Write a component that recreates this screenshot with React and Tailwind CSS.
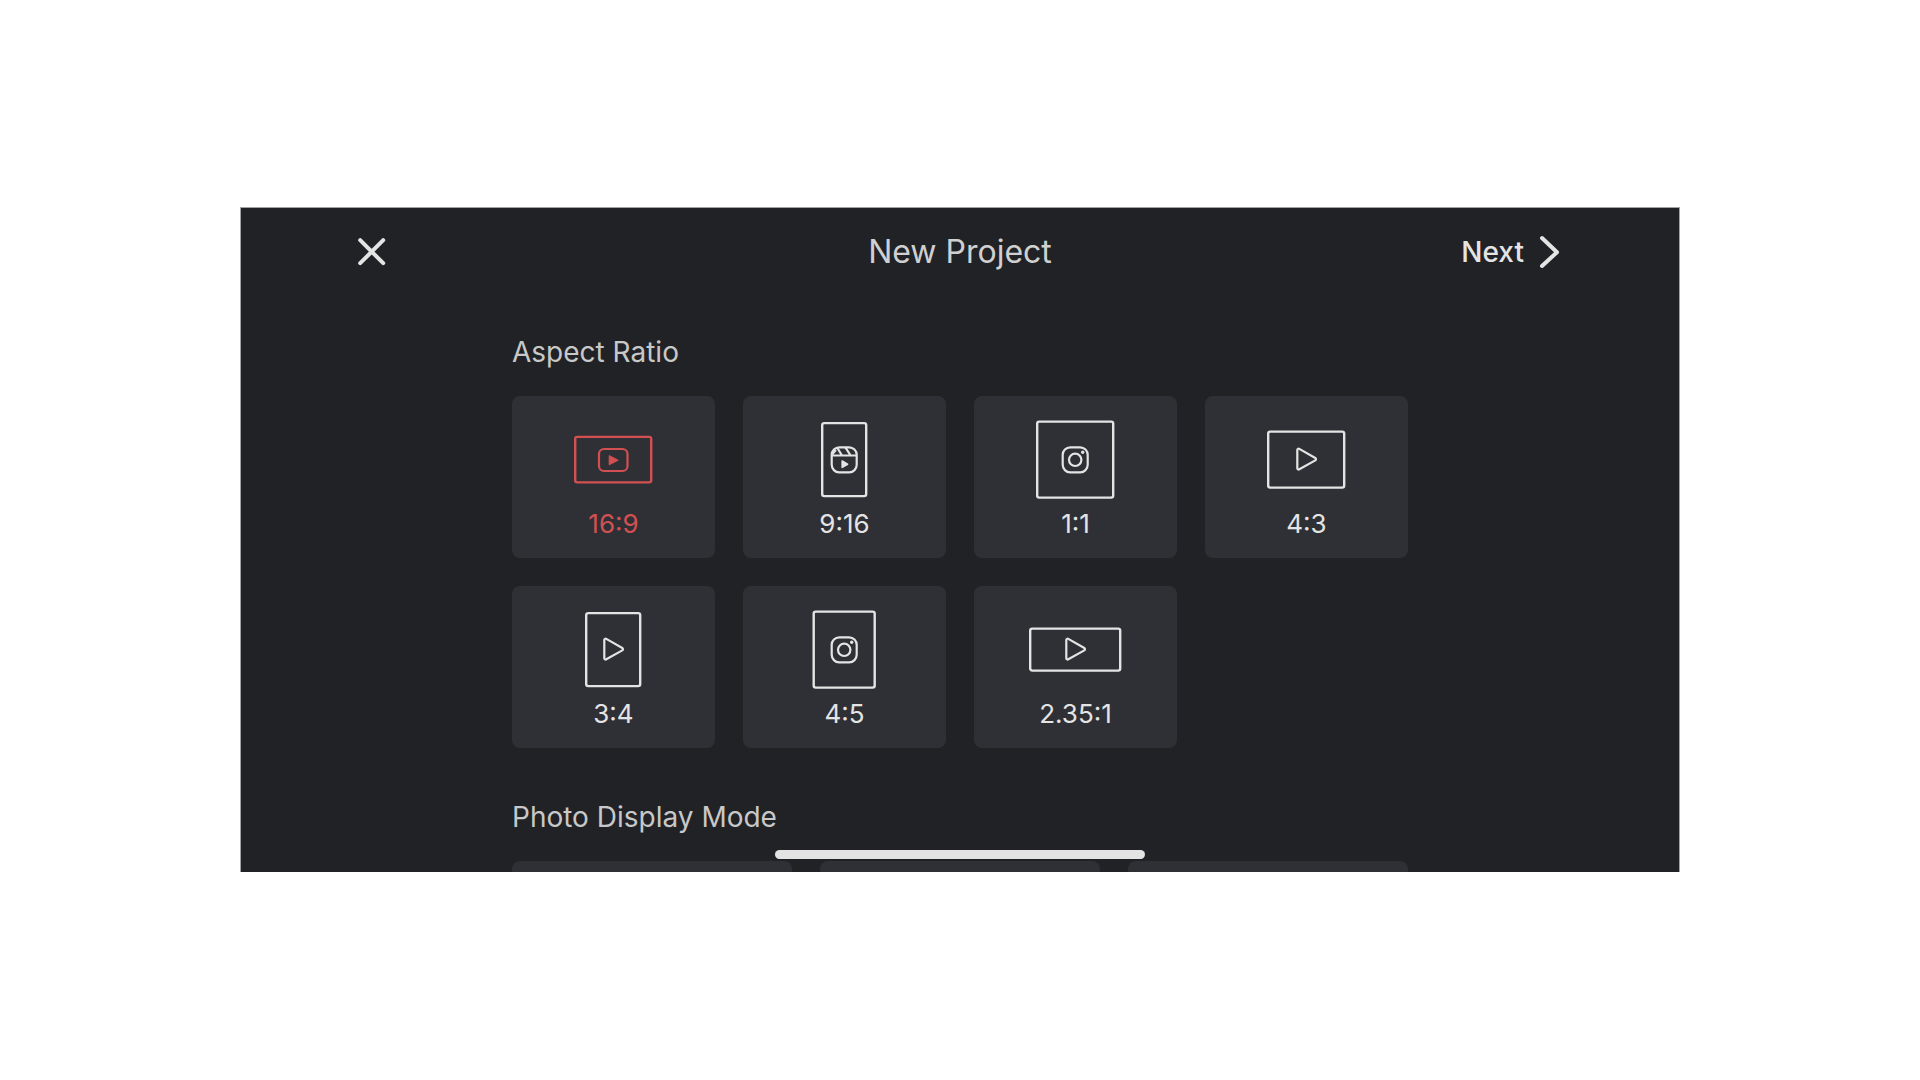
import React, { useState } from 'react';

const YoutubeGlyph = () => (
  <g>
    <rect x="32" y="29" width="28.5" height="22" rx="5" fill="none" stroke="currentColor" strokeWidth="2.2" />
    <path d="M42.2 35.6v9.2l9-4.6z" fill="currentColor" stroke="currentColor" strokeWidth="1" strokeLinejoin="round" />
  </g>
);

const ReelsGlyph = () => (
  <g fill="none" stroke="currentColor" strokeWidth="2.2">
    <rect x="33.7" y="27.3" width="25" height="25" rx="7.5" />
    <path d="M33.7 35.5h25M39.4 28l4.6 7.5M47.4 27.3l5.2 8.2M34.4 34l3.5-4" />
    <path d="M44.2 41v6.4l5.4-3.2z" fill="currentColor" strokeWidth="1.6" strokeLinejoin="round" />
  </g>
);

const InstagramGlyph = () => (
  <g fill="none" stroke="currentColor" strokeWidth="2.2">
    <rect x="33.7" y="27.3" width="25" height="25" rx="7.5" />
    <circle cx="46.2" cy="39.8" r="6.2" />
    <circle cx="53.7" cy="32.3" r="1.7" fill="currentColor" stroke="none" />
  </g>
);

const PlayGlyph = () => (
  <path
    d="M37.3 30v18.2c0 1.1 1.1 1.7 2 1.1l16-8.9c.9-.5.9-1.8 0-2.4l-16-9.1c-.9-.5-2 .1-2 1.1z"
    fill="none"
    stroke="currentColor"
    strokeWidth="2.2"
    strokeLinejoin="round"
  />
);

const ratios = [
  { label: '16:9', width: 76, height: 45.5, Glyph: YoutubeGlyph },
  { label: '9:16', width: 44, height: 73, Glyph: ReelsGlyph },
  { label: '1:1', width: 76, height: 76, Glyph: InstagramGlyph },
  { label: '4:3', width: 76, height: 56, Glyph: PlayGlyph },
  { label: '3:4', width: 54, height: 73, Glyph: PlayGlyph },
  { label: '4:5', width: 61, height: 76, Glyph: InstagramGlyph },
  { label: '2.35:1', width: 90, height: 42, Glyph: PlayGlyph }
];

const photoModes = ['fit', 'fill', 'ken-burns'];

const RatioCard = ({ ratio, selected, onSelect }) => {
  const { label, width, height, Glyph } = ratio;

  return (
    <button
      type="button"
      aria-pressed={selected}
      onClick={() => onSelect(label)}
      className={`flex flex-col items-center rounded-lg bg-[#2f3035] pt-6 pb-[18px] cursor-pointer ${
        selected ? 'text-[#d25052]' : 'text-[#e4e4e4]'
      }`}
    >
      <svg width="93" height="80" viewBox="0 0 93 80" aria-hidden="true">
        <rect
          x={46.2 - width / 2}
          y={39.6 - height / 2}
          width={width}
          height={height}
          rx="2"
          fill="none"
          stroke="currentColor"
          strokeWidth="2.4"
        />
        <Glyph />
      </svg>
      <span className="mt-2 text-[26px] leading-8">{label}</span>
    </button>
  );
};

const App = () => {
  const [selectedRatio, setSelectedRatio] = useState('16:9');

  return (
    <main className="flex min-h-screen items-center justify-center bg-white pb-px font-['Inter',sans-serif]">
      <div className="relative aspect-[288/133] w-3/4 overflow-hidden border-x border-t border-[#a3a3a4] bg-[#212226]">
        <header className="grid h-[88px] grid-cols-3 items-center px-[8%] text-[#e4e4e4]">
          <button type="button" aria-label="Close" className="justify-self-start cursor-pointer">
            <svg width="32" height="32" viewBox="0 0 32 32" aria-hidden="true">
              <path d="M4.2 4.2l23 23M27.2 4.2l-23 23" stroke="currentColor" strokeWidth="4" strokeLinecap="round" />
            </svg>
          </button>
          <h1 className="text-center text-[32px] leading-10 text-[#d0d0d0]">New Project</h1>
          <button type="button" className="flex items-center gap-3 justify-self-end text-[28px] leading-8 font-medium cursor-pointer">
            Next
            <svg width="28" height="36" viewBox="0 0 28 36" aria-hidden="true">
              <path d="M6 4l15 14.2L6 32" fill="none" stroke="currentColor" strokeWidth="4" strokeLinecap="round" strokeLinejoin="round" />
            </svg>
          </button>
        </header>

        <div className="mx-auto flex max-w-4xl flex-col gap-[53px] pt-10">
          <section>
            <h2 className="mb-7 text-[28px] leading-8 text-[#c8c8c8]">Aspect Ratio</h2>
            <div className="grid grid-cols-4 gap-7">
              {ratios.map((ratio) => (
                <RatioCard
                  key={ratio.label}
                  ratio={ratio}
                  selected={selectedRatio === ratio.label}
                  onSelect={setSelectedRatio}
                />
              ))}
            </div>
          </section>

          <section>
            <h2 className="mb-7 text-[28px] leading-8 text-[#c8c8c8]">Photo Display Mode</h2>
            <div className="grid grid-cols-3 gap-7">
              {photoModes.map((mode) => (
                <div key={mode} className="h-40 rounded-lg bg-[#2f3035]" />
              ))}
            </div>
          </section>
        </div>

        <div className="absolute bottom-[13px] left-1/2 h-[9px] w-[370px] -translate-x-1/2 rounded-full bg-[#e3e3e3]" />
      </div>
    </main>
  );
};

export default App;
